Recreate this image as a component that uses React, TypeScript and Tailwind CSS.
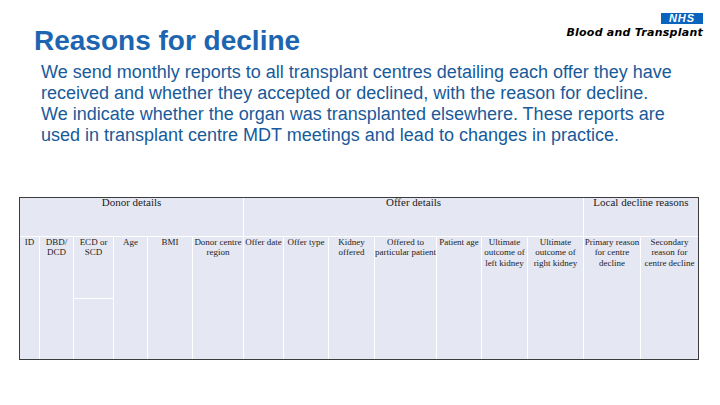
import React from "react";

type Col = { w: number; lines: string[]; split?: boolean };

const donor: Col[] = [
  { w: 20, lines: ["ID"] },
  { w: 34, lines: ["DBD/", "DCD"] },
  { w: 40, lines: ["ECD or", "SCD"], split: true },
  { w: 34, lines: ["Age"] },
  { w: 45, lines: ["BMI"] },
  { w: 51, lines: ["Donor centre", "region"] },
];
const offer: Col[] = [
  { w: 40, lines: ["Offer date"] },
  { w: 45, lines: ["Offer type"] },
  { w: 46, lines: ["Kidney", "offered"] },
  { w: 62, lines: ["Offered to", "particular patient"] },
  { w: 45, lines: ["Patient age"] },
  { w: 46, lines: ["Ultimate", "outcome of", "left kidney"] },
  { w: 56, lines: ["Ultimate", "outcome of", "right kidney"] },
];
const local: Col[] = [
  { w: 57, lines: ["Primary reason", "for centre", "decline"] },
  { w: 57, lines: ["Secondary", "reason for", "centre decline"] },
];

function Cell({ c, last }: { c: Col; last: boolean }) {
  const text = (
    <div className="text-[9px] leading-[10.4px] text-center whitespace-nowrap text-[#1c1c1c] flex flex-col items-center">
      {c.lines.map((l, i) => (
        <span key={i}>{l}</span>
      ))}
    </div>
  );
  return (
    <div
      className={`h-full flex flex-col shrink-0 ${last ? "" : "border-r border-white"}`}
      style={{ width: c.w }}
    >
      {c.split ? (
        <div className="h-[62px] border-b border-white">{text}</div>
      ) : (
        text
      )}
    </div>
  );
}

function Group({ title, cols, end }: { title: string; cols: Col[]; end: boolean }) {
  const w = cols.reduce((a, c) => a + c.w, 0);
  return (
    <div className="flex flex-col shrink-0" style={{ width: w }}>
      <div
        className={`h-[39px] border-b border-white text-center text-[11px] leading-none text-[#1c1c1c] ${
          end ? "" : "border-r"
        }`}
      >
        <div className="-mt-[1px]">{title}</div>
      </div>
      <div className="flex h-[122px]">
        {cols.map((c, i) => (
          <Cell key={i} c={c} last={end && i === cols.length - 1} />
        ))}
      </div>
    </div>
  );
}

export default function App() {
  return (
    <div
      className="w-[720px] h-[405px] bg-white overflow-hidden"
      style={{ fontFamily: '"Liberation Sans", Arial, sans-serif' }}
    >
      <div className="flex items-start justify-between">
        <h1 className="pt-[25px] pl-[34px] text-[28px] leading-[32px] font-bold text-[#1d65b1]">
          Reasons for decline
        </h1>
        <div className="pt-[13px] pr-[17px] flex flex-col items-end">
          <div
            className="w-[42px] h-[11px] bg-[#0a64bd] text-white font-bold italic text-[11px] leading-[11px] text-center tracking-[1px]"
            style={{ fontFamily: '"Liberation Sans", Arial, sans-serif' }}
          >
            NHS
          </div>
          <div
            className="mt-[3px] text-[11px] leading-[11px] font-bold italic text-black tracking-[0.25px] whitespace-nowrap"
            style={{ fontFamily: '"DejaVu Sans", sans-serif' }}
          >
            Blood and Transplant
          </div>
        </div>
      </div>
      <p className="mt-[5px] ml-[41px] text-[18px] leading-[21px] text-[#185a9a] whitespace-nowrap">
        We send monthly reports to all transplant centres detailing each offer they have
        <br />
        received and whether they accepted or declined, with the reason for decline.
        <br />
        We indicate whether the organ was transplanted elsewhere. These reports are
        <br />
        used in transplant centre MDT meetings and lead to changes in practice.
      </p>
      <div
        className="mt-[51px] ml-[19px] w-[680px] border border-[#3c3c3c] bg-[#e5e8f3] flex"
        style={{ fontFamily: '"Liberation Serif", "Times New Roman", serif' }}
      >
        <Group title="Donor details" cols={donor} end={false} />
        <Group title="Offer details" cols={offer} end={false} />
        <Group title="Local decline reasons" cols={local} end={true} />
      </div>
    </div>
  );
}
